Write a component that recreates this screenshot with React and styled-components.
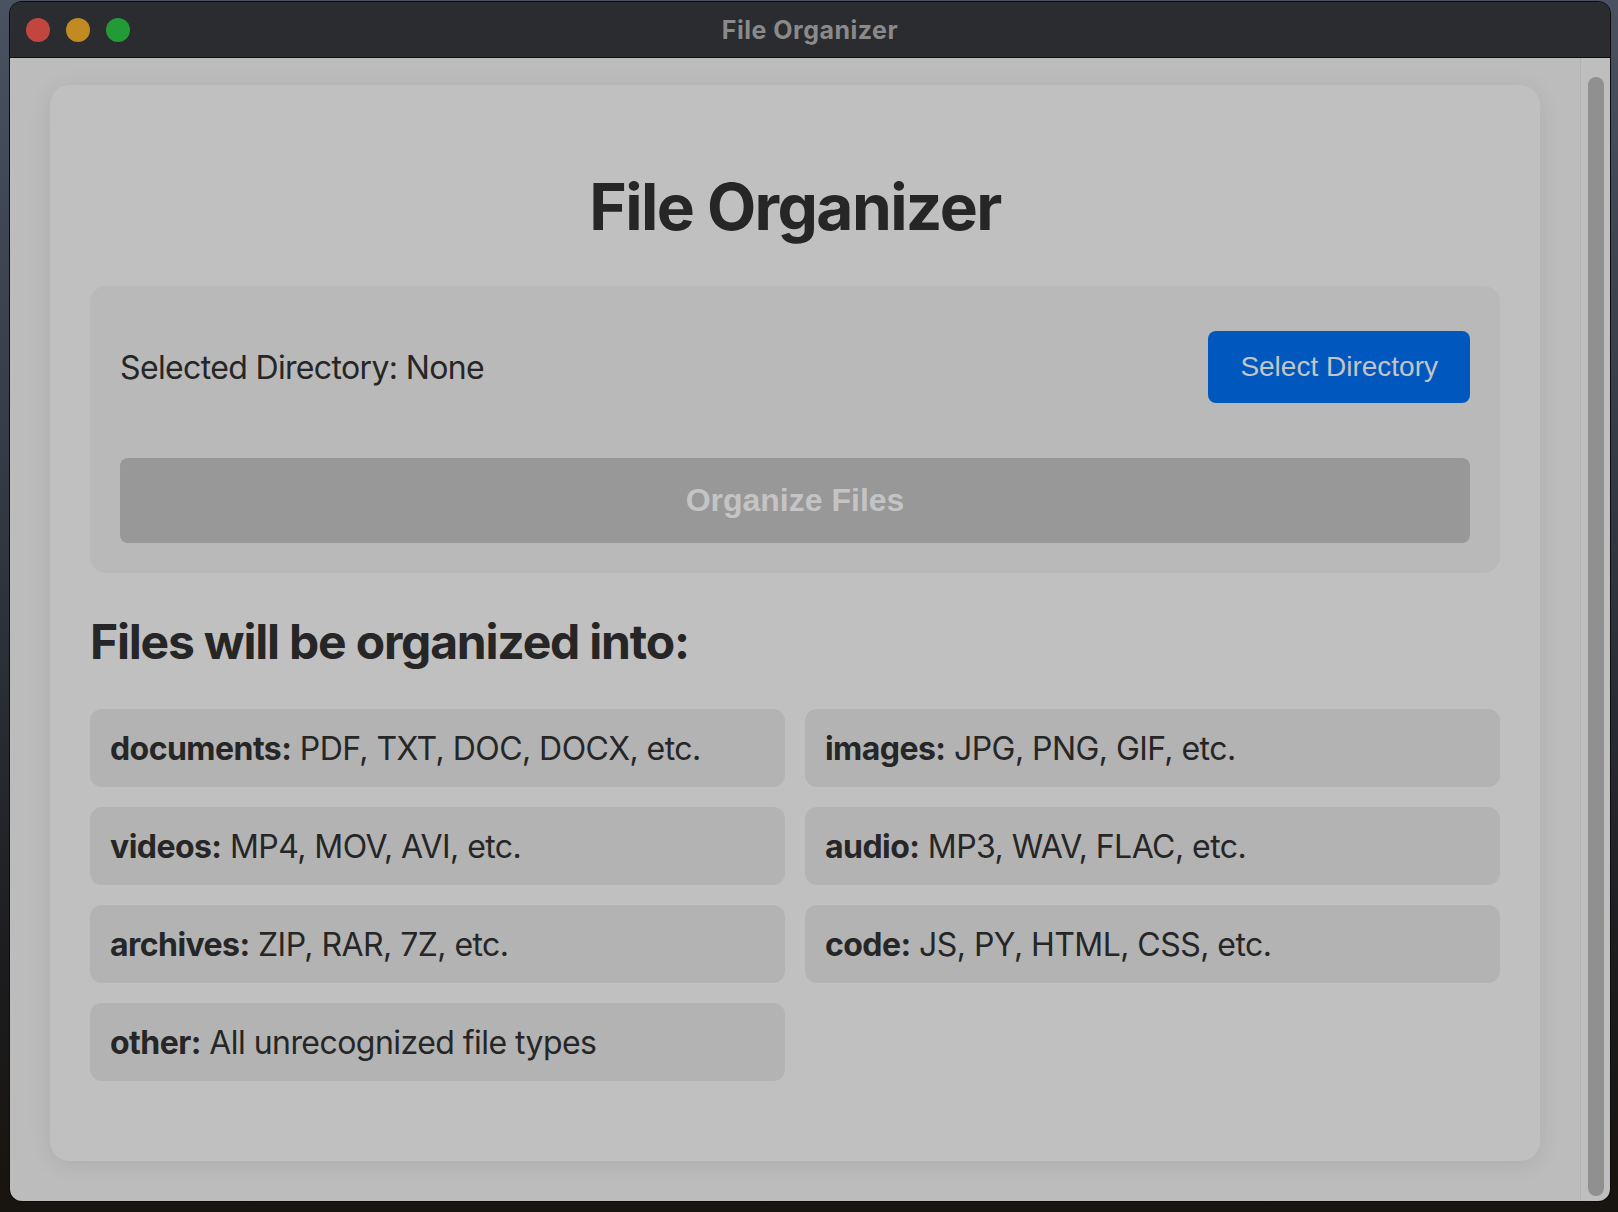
import React from 'react';
import styled, { createGlobalStyle } from 'styled-components';

const GlobalStyle = createGlobalStyle`
  html, body {
    margin: 0;
    padding: 0;
  }
  body {
    background: #1a1c20;
    font-family: Inter, "Noto Sans", sans-serif;
  }
`;

// Fond du bureau autour de la fenêtre
const Desktop = styled.div`
  width: 1618px;
  height: 1212px;
  box-sizing: border-box;
  padding: 2px 8px 11px 10px;
  display: flex;
  background: linear-gradient(180deg, #4a5261 0%, #343a44 40%, #1c1c1e 80%, #18140f 100%);
`;

const Window = styled.div`
  flex: 1;
  display: flex;
  flex-direction: column;
  border-radius: 12px;
  overflow: hidden;
  box-shadow: 0 0 0 1px #0c0c0c;
`;

const TitleBar = styled.div`
  height: 55px;
  flex-shrink: 0;
  position: relative;
  display: flex;
  align-items: center;
  justify-content: center;
  background: #2b2c2f;
  border-bottom: 1px solid #101010;
`;

const Lights = styled.div`
  position: absolute;
  left: 16px;
  top: 16px;
  display: flex;
  gap: 16px;
`;

const Light = styled.span`
  width: 24px;
  height: 24px;
  border-radius: 50%;
  background: ${p => p.$color};
`;

const WindowTitle = styled.div`
  font-family: Inter, sans-serif;
  font-weight: 700;
  font-size: 25px;
  color: #8a8a8a;
  letter-spacing: 0.5px;
`;

const Body = styled.div`
  flex: 1;
  display: flex;
  min-height: 0;
`;

const Content = styled.div`
  flex: 1;
  background: #bcbcbc;
  padding: 27px 40px 0 40px;
  overflow: hidden;
`;

const ScrollTrack = styled.div`
  width: 30px;
  flex-shrink: 0;
  box-sizing: border-box;
  padding: 19px 6px 5px 7px;
  background: #bebebe;
  border-left: 1px solid #b1b1b1;
  display: flex;
`;

const ScrollThumb = styled.div`
  flex: 1;
  border-radius: 8px;
  background: #909090;
`;

const Card = styled.div`
  background: #c0c0c0;
  border-radius: 20px;
  padding: 40px 40px 80px;
  box-shadow: 0 4px 24px rgba(0, 0, 0, 0.08);
  color: #262626;
`;

const MainTitle = styled.h1`
  font-size: 64px;
  font-weight: 700;
  letter-spacing: -1.6px;
  text-align: center;
  margin: 43px 0 41px;
  line-height: 77px;
`;

const Panel = styled.div`
  background: #b9b9b9;
  border-radius: 16px;
  padding: 30px;
`;

const DirRow = styled.div`
  display: flex;
  align-items: center;
  justify-content: space-between;
  padding: 15px 0;
  margin-bottom: 40px;
`;

const DirLabel = styled.span`
  font-size: 32px;
  letter-spacing: -0.65px;
  color: #262626;
`;

const Button = styled.button`
  font-family: "Liberation Sans", Arial, sans-serif;
  border: none;
  border-radius: 8px;
  cursor: pointer;
  color: #c4c4c4;
`;

const SelectButton = styled(Button)`
  font-size: 28px;
  padding: 20px 32px;
  background: #0058bf;
`;

const OrganizeButton = styled(Button)`
  width: 100%;
  font-size: 32px;
  font-weight: 700;
  padding: 24px;
  background: #989898;
  cursor: not-allowed;
`;

const SubTitle = styled.h2`
  font-size: 48px;
  font-weight: 700;
  letter-spacing: -1.2px;
  margin: 40px 0 38px;
  line-height: 58px;
`;

const Grid = styled.div`
  display: grid;
  grid-template-columns: 1fr 1fr;
  gap: 20px;
`;

const Category = styled.div`
  background: #b3b3b3;
  border-radius: 12px;
  padding: 21px 20px 19px;
  font-size: 32px;
  line-height: 38px;
  letter-spacing: -0.55px;

  strong {
    font-weight: 700;
  }
`;

const categories = [
  ['documents', 'PDF, TXT, DOC, DOCX, etc.'],
  ['images', 'JPG, PNG, GIF, etc.'],
  ['videos', 'MP4, MOV, AVI, etc.'],
  ['audio', 'MP3, WAV, FLAC, etc.'],
  ['archives', 'ZIP, RAR, 7Z, etc.'],
  ['code', 'JS, PY, HTML, CSS, etc.'],
  ['other', 'All unrecognized file types'],
];

const App = () => (
  <>
    <GlobalStyle />
    <Desktop>
      <Window>
        <TitleBar>
          <Lights>
            <Light $color="#c0463f" />
            <Light $color="#c18b22" />
            <Light $color="#229a35" />
          </Lights>
          <WindowTitle>File Organizer</WindowTitle>
        </TitleBar>
        <Body>
          <Content>
            <Card>
              <MainTitle>File Organizer</MainTitle>
              <Panel>
                <DirRow>
                  <DirLabel>Selected Directory: None</DirLabel>
                  <SelectButton>Select Directory</SelectButton>
                </DirRow>
                <OrganizeButton disabled>Organize Files</OrganizeButton>
              </Panel>
              <SubTitle>Files will be organized into:</SubTitle>
              <Grid>
                {categories.map(([name, types]) => (
                  <Category key={name}>
                    <strong>{name}:</strong> {types}
                  </Category>
                ))}
              </Grid>
            </Card>
          </Content>
          <ScrollTrack>
            <ScrollThumb />
          </ScrollTrack>
        </Body>
      </Window>
    </Desktop>
  </>
);

export default App;
